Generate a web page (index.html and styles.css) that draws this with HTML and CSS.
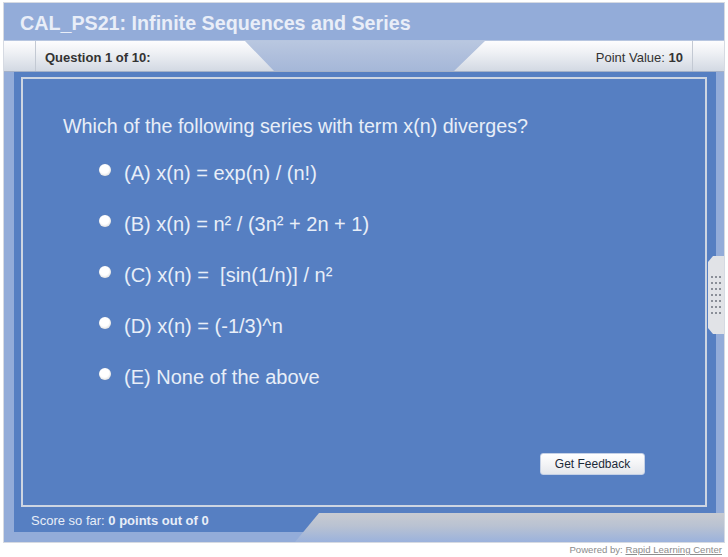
FILE: index.html
```html
<!DOCTYPE html>
<html lang="en">
<head>
    <meta charset="UTF-8">
    <title>CAL_PS21: Infinite Sequences and Series</title>
    <link rel="stylesheet" href="styles.css">
</head>
<body>
    <div id="quiz">
        <div class="title">CAL_PS21: Infinite Sequences and Series</div>

        <div class="qbar">
            <div class="cap"></div>
            <div class="qmain">
                <span class="qnum">Question 1 of 10:</span>
                <span class="points">Point Value: <b>10</b></span>
            </div>
            <div class="cap cap-right"></div>
        </div>

        <div class="panel">
            <div class="box">
                <p class="question">Which of the following series with term x(n) diverges?</p>
                <ul class="options">
                    <li><span class="radio"></span>(A) x(n) = exp(n) / (n!)</li>
                    <li><span class="radio"></span>(B) x(n) = n² / (3n² + 2n + 1)</li>
                    <li><span class="radio"></span>(C) x(n) = &nbsp;[sin(1/n)] / n²</li>
                    <li><span class="radio"></span>(D) x(n) = (-1/3)^n</li>
                    <li><span class="radio"></span>(E) None of the above</li>
                </ul>
                <div class="actions">
                    <button class="feedback">Get Feedback</button>
                </div>
            </div>
            <div class="score">Score so far: <b>0 points out of 0</b></div>
        </div>

        <div class="tail"></div>
        <div class="grip">
            <span></span><span></span><span></span><span></span><span></span><span></span><span></span>
            <span></span><span></span><span></span><span></span><span></span><span></span><span></span>
            <span></span><span></span><span></span><span></span><span></span><span></span><span></span>
        </div>
    </div>

    <div class="powered">Powered by: <a href="#">Rapid Learning Center</a></div>
</body>
</html>
```

FILE: styles.css
```css
body {
    margin: 2px 0 0 3px;
    font-family: 'Liberation Sans', Arial, sans-serif;
    background-color: #fff;
}
#quiz {
    position: relative;
    width: 720px;
    border: 1px solid #d6dae2;
    background-color: #93acd9;
    padding-bottom: 10px;
}
.title {
    height: 35px;
    line-height: 36px;
    padding: 2px 0 0 16px;
    color: #e9eef8;
    font-size: 19.7px;
    font-weight: bold;
}
.qbar {
    display: flex;
    height: 30px;
    border-top: 1px solid #b7c6e0;
    border-bottom: 1px solid #a4b1c8;
    background: linear-gradient(#fdfdfe, #eef0f4 40%, #d3d9e3);
}
.cap {
    width: 31px;
    border-right: 1px solid #c3c9d3;
}
.cap-right {
    border-right: none;
    border-left: 1px solid #c3c9d3;
}
.qmain {
    flex: 1;
    display: flex;
    justify-content: space-between;
    align-items: center;
    padding: 2px 9px 0 9px;
    font-size: 13px;
    color: #333;
    background: linear-gradient(#b9c7e0, #a5b7d8);
    position: relative;
}
.qmain::before {
    content: "";
    position: absolute;
    top: 0;
    bottom: 0;
    left: 0;
    right: 0;
    background: linear-gradient(#fdfdfe, #eef0f4 40%, #d3d9e3);
    clip-path: polygon(0 0, 209px 0, 238px 100%, 418px 100%, 449px 0, 100% 0, 100% 100%, 0 100%);
}
.qnum, .points {
    position: relative;
}
.qnum {
    font-weight: bold;
}
.panel {
    margin: 0 8px 0 10px;
    padding: 5px 9px 0 7px;
    background-color: #567fc2;
}
.box {
    height: 426px;
    border: 2px solid #cdd5e2;
    padding-left: 40px;
    display: flex;
    flex-direction: column;
}
.question {
    margin: 36px 0 0 0;
    font-size: 19.7px;
    color: #e8eef8;
}
.options {
    list-style: none;
    margin: 10px 0 0 36px;
    padding: 0;
}
.options li {
    display: flex;
    align-items: center;
    height: 51px;
    font-size: 20px;
    color: #e8eef8;
}
.radio {
    width: 12px;
    height: 12px;
    border-radius: 50%;
    margin: -8px 13px 0 0;
    background: radial-gradient(circle at 45% 40%, #fff 45%, #e2e2e2 75%, #b8b8b8);
    box-shadow: 0 0 1px #7f8ea8;
}
.actions {
    margin-top: auto;
    display: flex;
    justify-content: flex-end;
    padding: 0 60px 30px 0;
}
.feedback {
    width: 105px;
    height: 22px;
    padding: 0;
    border: 1px solid #c5d1e6;
    border-radius: 3px;
    background: linear-gradient(#ffffff, #f3f4f6 50%, #e4e7ec);
    color: #1c2a38;
    font-family: 'Liberation Sans', Arial, sans-serif;
    font-size: 12px;
    cursor: pointer;
}
.score {
    position: relative;
    z-index: 1;
    width: 260px;
    height: 25px;
    line-height: 27px;
    padding-left: 10px;
    font-size: 13px;
    color: #e8eef8;
}
.tail {
    position: absolute;
    left: 291px;
    right: 0;
    bottom: 0;
    height: 29px;
    background: linear-gradient(#c8cbd1, #b9c2d2 45%, #9bb2dc);
    clip-path: polygon(24px 0, 100% 0, 100% 100%, 0 100%);
}
.grip {
    position: absolute;
    right: 0;
    top: 253px;
    width: 16px;
    height: 78px;
    padding: 20px 0 0 3px;
    box-sizing: border-box;
    background-color: #e1e3e7;
    clip-path: polygon(5px 0, 100% 0, 100% 100%, 5px 100%, 0 72px, 0 6px);
    display: grid;
    grid-template-columns: repeat(3, 2px);
    grid-template-rows: repeat(7, 2px);
    grid-auto-flow: column;
    column-gap: 2px;
    row-gap: 4px;
}
.grip span {
    background-color: #8a8f98;
}
.powered {
    width: 719px;
    text-align: right;
    font-size: 9.6px;
    color: #8c8c8c;
    padding-top: 1px;
}
.powered a {
    color: #8c8c8c;
}
```
